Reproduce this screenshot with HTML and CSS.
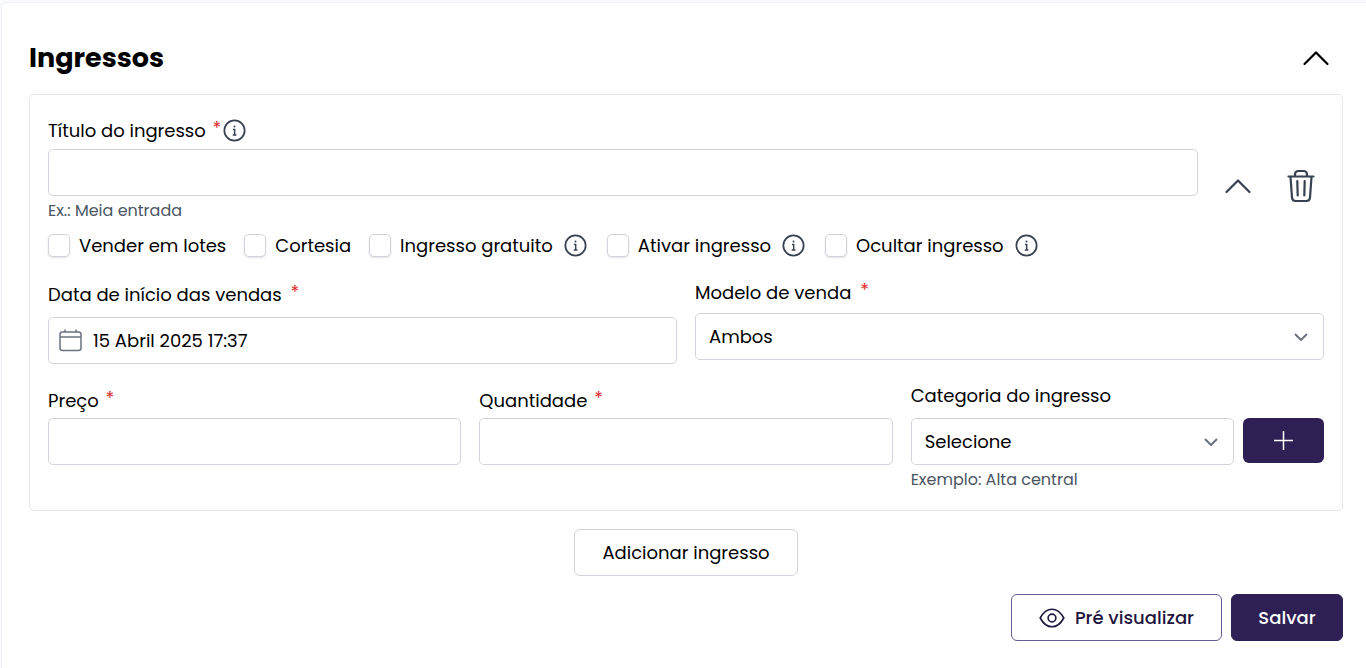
FILE: index.html
```html
<!DOCTYPE html>
<html lang="pt-BR">
<head>
<meta charset="utf-8">
<meta name="viewport" content="width=device-width, initial-scale=1">
<title>Ingressos</title>
<link rel="stylesheet" href="styles.css">
</head>
<body>
<svg class="sprite" aria-hidden="true">
  <symbol id="info" viewBox="0 0 24 24">
    <circle cx="12" cy="12" r="10.6" fill="none" stroke="currentColor" stroke-width="1.8"/>
    <circle cx="12" cy="7.8" r="1" fill="currentColor"/>
    <path d="M10.4 11H12.2V16.4M10.2 16.6H14" fill="none" stroke="currentColor" stroke-width="1.5"/>
  </symbol>
  <symbol id="up" viewBox="0 0 36 36">
    <path d="M6.5 24L18 12.400L29.500 24" fill="none" stroke="currentColor" stroke-width="2.200" stroke-linecap="round" stroke-linejoin="round"/>
  </symbol>
</svg>
<main class="card">
  <header class="card-header">
    <h1 class="title">Ingressos</h1>
    <button type="button" class="icon-button dark" aria-label="Recolher seção"><svg class="icon-large"><use href="#up"/></svg></button>
  </header>

  <form class="form">
    <section class="panel">
      <div class="ticket-row">
        <div class="field grow">
          <div class="label-row">
            <label for="titulo">Título do ingresso <span class="required">*</span></label>
            <svg class="icon-info"><use href="#info"/></svg>
          </div>
          <input class="control" id="titulo" type="text">
          <p class="hint">Ex.: Meia entrada</p>
        </div>
        <div class="ticket-actions">
          <button type="button" class="icon-button" aria-label="Recolher ingresso"><svg class="icon-large"><use href="#up"/></svg></button>
          <button type="button" class="icon-button" aria-label="Excluir ingresso">
            <svg class="icon-large" viewBox="0 0 36 36" fill="none" stroke="currentColor" stroke-width="2.200" stroke-linecap="round" stroke-linejoin="round">
              <path d="M5.500 8.500H30.500M7.500 9L9 29.500Q9.300 33 12.500 33H23.500Q26.700 33 27 29.500L28.500 9M12 8.500V6.500Q12 3 15.500 3H20.500Q24 3 24 6.500V8.500M14.300 13L14.700 27.500M21.700 13L21.300 27.500"/>
            </svg>
          </button>
        </div>
      </div>

      <div class="options">
        <div class="option"><input class="check" type="checkbox" id="lotes"><label for="lotes">Vender em lotes</label></div>
        <div class="option"><input class="check" type="checkbox" id="cortesia"><label for="cortesia">Cortesia</label></div>
        <div class="option"><input class="check" type="checkbox" id="gratuito"><label for="gratuito">Ingresso gratuito</label><svg class="icon-info"><use href="#info"/></svg></div>
        <div class="option"><input class="check" type="checkbox" id="ativar"><label for="ativar">Ativar ingresso</label><svg class="icon-info"><use href="#info"/></svg></div>
        <div class="option"><input class="check" type="checkbox" id="ocultar"><label for="ocultar">Ocultar ingresso</label><svg class="icon-info"><use href="#info"/></svg></div>
      </div>

      <div class="sale-row">
        <div class="field date-field">
          <label for="data">Data de início das vendas <span class="required wide">*</span></label>
          <div class="control date-control">
            <svg class="icon-calendar" viewBox="0 0 24 24" fill="none" stroke="currentColor" stroke-width="1.500">
              <rect x="1" y="3" width="21" height="18.500" rx="2.500"/><path d="M1 8H22M6 .5V3M17 .5V3"/>
            </svg>
            <input class="date-input" id="data" type="text" value="15 Abril 2025 17:37">
          </div>
        </div>
        <div class="field select-field">
          <label for="modelo">Modelo de venda <span class="required wide">*</span></label>
          <div class="select-wrap">
            <select class="control select" id="modelo"><option>Ambos</option></select>
            <svg class="icon-down" viewBox="0 0 14 8"><path d="M1 1L7 7L13 1" fill="none" stroke="currentColor" stroke-width="2"/></svg>
          </div>
        </div>
      </div>

      <div class="price-row">
        <div class="field text-field">
          <label for="preco">Preço <span class="required">*</span></label>
          <input class="control" id="preco" type="text">
        </div>
        <div class="field text-field">
          <label for="quantidade">Quantidade <span class="required">*</span></label>
          <input class="control" id="quantidade" type="text">
        </div>
        <div class="field category-field">
          <label for="categoria">Categoria do ingresso</label>
          <div class="category-controls">
            <div class="select-wrap">
              <select class="control select" id="categoria"><option>Selecione</option></select>
              <svg class="icon-down" viewBox="0 0 14 8"><path d="M1 1L7 7L13 1" fill="none" stroke="currentColor" stroke-width="2"/></svg>
            </div>
            <button type="button" class="add-category" aria-label="Adicionar categoria"><svg class="icon-plus" viewBox="0 0 20 20"><path d="M9.500 0V19M0 9.500H19" stroke="currentColor" stroke-width="1.500"/></svg></button>
          </div>
          <p class="hint">Exemplo: Alta central</p>
        </div>
      </div>
    </section>

    <div class="add-row"><button type="button" class="button">Adicionar ingresso</button></div>
    <footer class="footer">
      <button type="button" class="button preview">
        <svg class="icon-eye" viewBox="0 0 26 20" fill="none" stroke="currentColor" stroke-width="1.600"><path d="M1.200 10Q6 1.200 13 1.200T24.800 10Q20 18.800 13 18.800T1.200 10Z"/><circle cx="13" cy="10" r="3.900"/></svg>
        Pré visualizar
      </button>
      <button type="submit" class="button save">Salvar</button>
    </footer>
  </form>
</main>
</body>
</html>
```
FILE: styles.css
```css
* { box-sizing: border-box; }
body {
  margin: 0;
  padding: 2px 0 0 1px;
  min-height: 100vh;
  display: flex;
  background: #f8fafc;
  color: #000;
  font: 18px/27px Poppins, Inter, "Open Sans", sans-serif;
  overflow-x: hidden;
}
button, input, select { font: inherit; color: inherit; }
button { cursor: pointer; }
.sprite { position: absolute; width: 0; height: 0; }
.card {
  flex: 1;
  min-width: 0;
  padding: 37px 23px 27px 27px;
  background: #fff;
  border: 1px solid #f0f1f4;
  border-right: 0;
  border-bottom: 0;
  border-radius: 6px 0 0 0;
}
.card-header { display: flex; align-items: center; justify-content: space-between; margin-bottom: 18px; padding-right: 9px; }
.title { margin: 0; font-size: 27px; line-height: 36px; font-weight: 700; }
.icon-button { display: flex; padding: 0; border: 0; background: none; color: #374151; }
.icon-button.dark { color: #000; }
.icon-large { width: 36px; height: 36px; }
.panel { padding: 22px 18px 19px; border: 1px solid #e5e7eb; border-radius: 5px; }
.field { display: flex; flex-direction: column; min-width: 0; }
.grow { flex: 1; }
.label-row { display: flex; align-items: center; gap: 2px; margin-bottom: 5px; }
.required { margin-left: 2px; color: #e02424; font-size: 18px; line-height: 18px; vertical-align: 3px; }
.required.wide { margin-left: 4px; }
.icon-info { width: 23px; height: 23px; color: #374151; flex: none; }
.control {
  width: 100%;
  height: 47px;
  padding: 0 13px;
  background: #fff;
  border: 1px solid #d1d5db;
  border-radius: 5px;
  outline-color: #2e1f54;
}
.hint { margin: 4px 0 0; font-size: 16px; line-height: 22px; color: #4b5563; }
.ticket-row { display: flex; gap: 22px; align-items: flex-end; }
.ticket-actions { display: flex; gap: 27px; padding: 0 5px 18px 0; }
.options { display: flex; flex-wrap: wrap; gap: 9px 18px; margin-top: 10px; }
.option { display: flex; align-items: center; }
.check {
  appearance: none;
  width: 22px;
  height: 23px;
  margin: 0 9px 0 0;
  background: #fff;
  border: 1px solid #d1d5db;
  border-radius: 5px;
  box-shadow: 0 1px 2px #0000001f;
}
.check:checked { background: #2e1f54; }
.option .icon-info { margin: 0 2px 0 11px; }
.sale-row { display: grid; grid-template-columns: 1fr 1fr; gap: 18px; margin-top: 20px; }
.date-field { gap: 9px; padding-top: 2px; }
.select-field { gap: 7px; }
.date-control { display: flex; align-items: center; gap: 10px; padding: 0 10px; }
.date-input { flex: 1; min-width: 0; padding: 0; border: 0; outline: 0; background: none; }
.icon-calendar { width: 24px; height: 24px; color: #6b7280; }
.select-wrap { display: grid; align-items: center; min-width: 0; }
.select-wrap > * { grid-area: 1 / 1; }
.select { appearance: none; }
.icon-down { justify-self: end; width: 14px; height: 8px; margin-right: 16px; color: #6b7280; pointer-events: none; }
.price-row { display: grid; grid-template-columns: 1fr 1fr 1fr; gap: 18px; margin-top: 18px; }
.text-field { gap: 4px; padding-top: 5px; }
.category-controls { display: flex; gap: 9px; margin-top: 9px; }
.category-controls .select-wrap { flex: 1; }
.add-category {
  display: flex;
  align-items: center;
  justify-content: center;
  width: 81px;
  height: 45px;
  border: 0;
  border-radius: 6px;
  background: #2e1f54;
  color: #fff;
}
.icon-plus { width: 20px; height: 20px; }
.add-row { display: flex; justify-content: center; margin-top: 18px; }
.button {
  height: 47px;
  min-width: 112px;
  padding: 0 27px;
  background: #fff;
  border: 1px solid #d1d5db;
  border-radius: 6px;
}
.footer { display: flex; justify-content: flex-end; gap: 9px; margin-top: 18px; }
.preview { display: flex; align-items: center; gap: 10px; border-color: #6b5b95; color: #1f1640; font-weight: 500; }
.icon-eye { width: 26px; height: 20px; }
.save { padding: 0 26px; background: #2e1f54; border-color: #2e1f54; color: #fff; font-weight: 500; }
```
